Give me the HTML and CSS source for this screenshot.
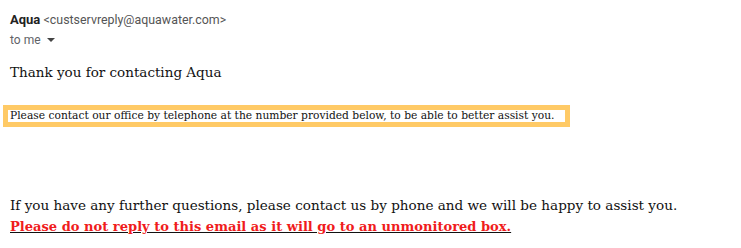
FILE: index.html
```html
<!DOCTYPE html>
<html>
<head>
<meta charset="utf-8">
<link rel="stylesheet" href="styles.css">
</head>
<body>
<div class="header">
  <div class="from"><span class="name">Aqua</span> <span class="addr">&lt;custservreply@aquawater.com&gt;</span></div>
  <div class="to">to me <span class="caret"></span></div>
</div>
<div class="body">
  <p class="thanks">Thank you for contacting Aqua</p>
  <div class="boxed"><span>Please contact our office by telephone at the number provided below, to be able to better assist you.</span></div>
  <p class="further">If you have any further questions, please contact us by phone and we will be happy to assist you.</p>
  <p class="warn">Please do not reply to this email as it will go to an unmonitored box.</p>
</div>
</body>
</html>
```
FILE: styles.css
```css
body {
  margin: 0;
  background: #fff;
  font-family: "DejaVu Serif", serif;
}
.header {
  padding: 11px 0 0 10px;
  font-family: Roboto, "Liberation Sans", sans-serif;
}
.from {
  font-size: 13px;
  line-height: 18px;
  color: #222;
}
.name {
  font-weight: 700;
}
.addr {
  font-size: 12.4px;
  color: #555;
}
.to {
  font-size: 12px;
  line-height: 18px;
  color: #5f6368;
  margin-top: 2px;
  display: flex;
  align-items: center;
  gap: 6px;
}
.caret {
  width: 0;
  height: 0;
  border-left: 4px solid transparent;
  border-right: 4px solid transparent;
  border-top: 4px solid #444;
}
.body {
  padding: 0 0 0 10px;
  color: #111;
}
.thanks {
  margin: 13px 0 0;
  font-size: 13.5px;
  line-height: 20px;
}
.boxed {
  margin: 23px 0 0 -7px;
  display: inline-block;
  border: 5px solid #ffca66;
  padding: 0 11px 0 2px;
  font-size: 10.7px;
  line-height: 12px;
}
.further {
  margin: 66px 0 0;
  font-size: 13.55px;
  line-height: 24px;
}
.warn {
  margin: 0;
  font-size: 13.05px;
  line-height: 20px;
  font-weight: 700;
  color: #f01c1c;
  text-decoration: underline;
  text-decoration-color: #111;
}
```
